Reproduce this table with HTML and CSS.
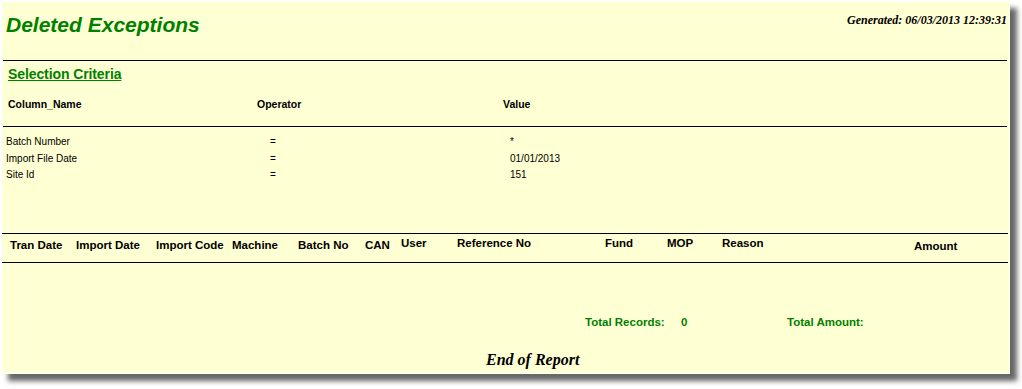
FILE: index.html
```html
<!DOCTYPE html>
<html>
<head>
<meta charset="utf-8">
<link rel="stylesheet" href="styles.css">
</head>
<body>
<div class="page">
  <div class="report-head">
    <div class="title">Deleted Exceptions</div>
    <div class="generated">Generated: 06/03/2013 12:39:31</div>
  </div>
  <div class="rule"></div>
  <div class="sel-title">Selection Criteria</div>
  <div class="crit-head">
    <span>Column_Name</span><span>Operator</span><span>Value</span>
  </div>
  <div class="rule"></div>
  <div class="crit-rows">
    <span>Batch Number</span><span>=</span><span>*</span>
    <span>Import File Date</span><span>=</span><span>01/01/2013</span>
    <span>Site Id</span><span>=</span><span>151</span>
  </div>
  <div class="tbl-head">
    <span>Tran Date</span>
    <span>Import Date</span>
    <span>Import Code</span>
    <span>Machine</span>
    <span>Batch No</span>
    <span>CAN</span>
    <span class="up">User</span>
    <span class="up">Reference No</span>
    <span class="up">Fund</span>
    <span class="up">MOP</span>
    <span class="up">Reason</span>
    <span class="down">Amount</span>
  </div>
  <div class="totals">
    <span>Total Records:</span><span>0</span><span>Total Amount:</span>
  </div>
  <div class="end">End of Report</div>
</div>
</body>
</html>
```
FILE: styles.css
```css
html, body {
  margin: 0;
  padding: 0;
  background: #ffffff;
}
body {
  font-family: "Liberation Sans", Arial, sans-serif;
  color: #000;
  min-height: 389px;
  padding-bottom: 14px;
  box-sizing: border-box;
}
.page {
  margin: 1px 0 0 1px;
  width: 1007px;
  height: 371px;
  box-sizing: content-box;
  border: 1px solid #ffffff;
  background: #ffffd4;
  box-shadow: 7px 7px 5px rgba(0, 0, 0, 0.6);
  display: flex;
  flex-direction: column;
}
.report-head {
  height: 58px;
  flex: none;
  box-sizing: border-box;
  padding: 10px 2px 0 4px;
  display: flex;
  justify-content: space-between;
  align-items: flex-start;
}
.title {
  font-size: 21px;
  line-height: 25px;
  font-weight: bold;
  font-style: italic;
  color: #008000;
}
.generated {
  font-family: "Liberation Serif", "Times New Roman", serif;
  font-size: 12px;
  line-height: 14px;
  font-weight: bold;
  font-style: italic;
  padding-top: 1px;
}
.rule {
  flex: none;
  height: 0;
  border-top: 1px solid #000;
  margin: 0 2px 0 1px;
}
.sel-title {
  margin: 5px 0 0 6px;
  font-size: 14px;
  line-height: 16px;
  font-weight: bold;
  color: #008000;
  text-decoration: underline;
  letter-spacing: -0.1px;
}
.crit-head {
  margin-top: 15px;
  height: 29px;
  flex: none;
  padding-left: 6px;
  display: grid;
  grid-template-columns: 249px 246px auto;
  font-size: 10.5px;
  line-height: 14px;
  font-weight: bold;
}
.crit-rows {
  padding: 7px 0 0 4px;
  display: grid;
  grid-template-columns: 264px 240px auto;
  font-size: 10px;
  line-height: 16.5px;
  height: 106px;
  flex: none;
  box-sizing: border-box;
  align-content: start;
}
.tbl-head {
  margin: 0 1px 0 0;
  height: 30px;
  flex: none;
  box-sizing: border-box;
  border-top: 1px solid #000;
  border-bottom: 1px solid #000;
  padding-left: 8px;
  display: grid;
  grid-template-columns: 66px 80px 76px 66px 67px 36px 56px 148px 62px 55px 192px auto;
  font-size: 11.5px;
  line-height: 14px;
  font-weight: bold;
}
.tbl-head span {
  padding-top: 4px;
}
.tbl-head span.up {
  padding-top: 2px;
}
.tbl-head span.down {
  padding-top: 5px;
}
.totals {
  margin: 52px 0 0 583px;
  display: grid;
  grid-template-columns: 96px 106px auto;
  font-size: 11.5px;
  line-height: 14px;
  font-weight: bold;
  color: #008000;
}
.end {
  margin: 21px 0 0 484px;
  font-family: "Liberation Serif", "Times New Roman", serif;
  font-size: 16px;
  line-height: 20px;
  font-weight: bold;
  font-style: italic;
}
```
